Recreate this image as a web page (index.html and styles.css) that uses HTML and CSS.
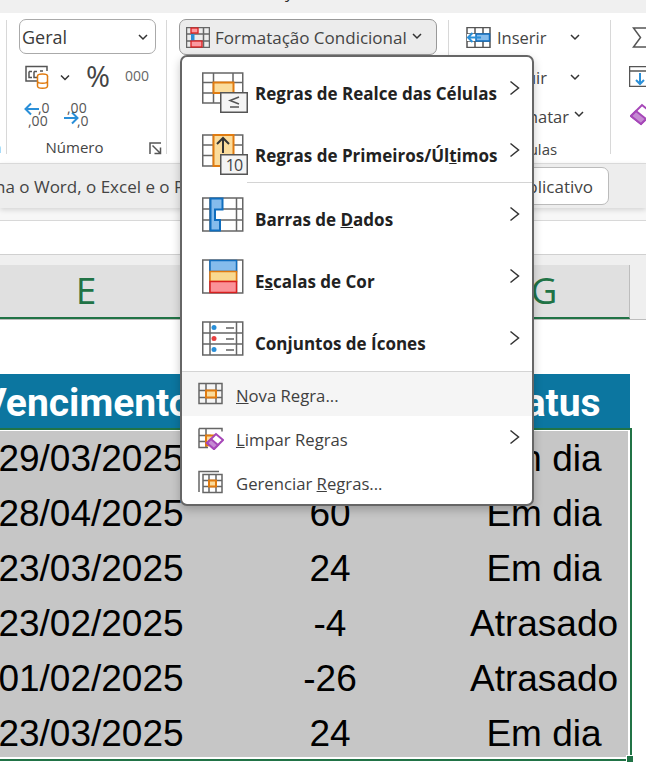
FILE: index.html
```html
<!DOCTYPE html>
<html lang="pt">
<head>
<meta charset="utf-8">
<title>Formatação Condicional</title>
<link rel="stylesheet" href="styles.css">
</head>
<body>
<div class="page">
  <div class="topbar"><span class="topfrag">y</span></div>
  <div class="ribbon">
    <div class="group g-clip"><span class="glabel-frag">a</span></div>
    <div class="group g-num">
      <div class="select"><span>Geral</span>
        <svg class="chev" width="12" height="8" viewBox="0 0 12 8"><path d="M2 2l4 4 4-4" class="ln"/></svg>
      </div>
      <div class="numrow">
        <svg class="ic-acc" width="24" height="24" viewBox="0 0 24 24"><path d="M1 6V1.500h21V6M1 6v10h11" class="dk"/><path d="M4 6.500h3M4 6.500v6h3M9 6.500h3M9 6.500v6h3M15 6h3" class="dk"/><ellipse cx="17.500" cy="11" rx="5" ry="2" class="or"/><path d="M12.500 11v10c0 3 10 3 10 0V11M12.500 16c0 3 10 3 10 0" class="or"/></svg>
        <svg class="chev-s" width="10" height="7" viewBox="0 0 10 7"><path d="M1 1.500l4 4 4-4" class="ln"/></svg>
        <span class="pct">%</span>
        <span class="thou">000</span>
      </div>
      <div class="decrow">
        <div class="dec"><svg class="dec-arrow" width="24" height="24" viewBox="0 0 24 24"><path d="M15 9H2M7 3.500L1.500 9 7 14.500" class="bl"/></svg><span class="dec-t">,0</span><span class="dec-b">,00</span></div>
        <div class="dec"><svg class="dec-arrow" width="24" height="26" viewBox="0 0 24 26"><path d="M1 18h13M9 12.500l5.500 5.500L9 23.500" class="bl"/></svg><span class="dec-t2">,00</span><span class="dec-b2">,0</span></div>
      </div>
      <div class="glabel">Número
        <svg class="launch" width="14" height="14" viewBox="0 0 14 14"><path d="M1 12V1h11M3.500 3.500l8 8M5.500 11.500h6v-6" class="dk"/></svg>
      </div>
    </div>
    <div class="group g-style">
      <div class="cfbtn">
        <svg class="cf-ic" width="24" height="21" viewBox="0 0 24 21"><path d="M.5.500h23v20H.5zM6 .5v20M17.500.5v20M.5 7h23M.5 14h23" class="gr"/><rect x="5" y="1" width="7" height="5" class="redb"/><rect x="5" y="7" width="3.500" height="7" class="blub"/><rect x="5" y="14" width="11" height="6" class="redb"/></svg>
        <span>Formatação Condicional</span>
        <svg class="chev2" width="12" height="8" viewBox="0 0 12 8"><path d="M2 2l4 4 4-4" class="ln"/></svg>
      </div>
    </div>
    <div class="group g-cells">
      <div class="cellrow r1">
        <svg class="ins" width="25" height="21" viewBox="0 0 25 21"><path d="M1 .5h23v20H1zM9 .5v20M17 .5v20M1 7h23M1 14h23" class="dk"/><rect x="1" y="7" width="10" height="7" class="whf"/><rect x="10" y="7" width="13.500" height="7" class="sb"/><path d="M15 10.500H2M6.500 6L2 10.500 6.500 15" class="bl"/></svg>
        <span class="cell-t">Inserir</span>
        <svg class="cell-ch" width="12" height="8" viewBox="0 0 12 8"><path d="M2 2l4 4 4-4" class="ln"/></svg>
      </div>
      <div class="cellrow r2">
        <span class="cell-t2">Excluir</span>
        <svg class="cell-ch" width="12" height="8" viewBox="0 0 12 8"><path d="M2 2l4 4 4-4" class="ln"/></svg>
      </div>
      <div class="cellrow r3">
        <span class="cell-t3">Formatar</span>
        <svg class="cell-ch3" width="12" height="8" viewBox="0 0 12 8"><path d="M2 2l4 4 4-4" class="ln"/></svg>
      </div>
      <div class="glabel g2">Células</div>
    </div>
    <div class="group g-edit">
      <svg class="sig" width="16" height="21" viewBox="0 0 16 21"><path d="M16 1H1.500l7 9.500-7 9.500H16" class="dk"/></svg>
      <svg class="fil" width="20" height="21" viewBox="0 0 20 21"><path d="M20 .5H.5v20H20M.5 5H20" class="dk"/><path d="M11 7v11M7 14l4 4 4-4" class="bl"/></svg>
      <svg class="era" width="20" height="24" viewBox="0 0 20 24"><path d="M1 13l11-11 10 8-11 11z" class="pu"/><path d="M1 13l5-5 10 8-5 5z" class="puf"/></svg>
    </div>
  </div>
  <div class="msgbar">
    <span class="msgtext">na o Word, o Excel e o PowerPoint</span>
    <span class="msgbtn">Atualizar aplicativo</span>
  </div>
  <div class="formula"></div>
  <div class="colstrip">
    <div class="colhead">
      <span class="coll">E</span><span class="coll">F</span><span class="coll">G</span>
    </div>
  </div>
  <div class="gap"></div>
  <div class="table">
    <div class="thead"><span>Vencimento</span><span>Dias</span><span>Status</span></div>
    <div class="selection">
      <div class="tbody">
        <div class="row"><span>29/03/2025</span><span>30</span><span>Em dia</span></div>
        <div class="row"><span>28/04/2025</span><span>60</span><span>Em dia</span></div>
        <div class="row"><span>23/03/2025</span><span>24</span><span>Em dia</span></div>
        <div class="row"><span>23/02/2025</span><span>-4</span><span>Atrasado</span></div>
        <div class="row"><span>01/02/2025</span><span>-26</span><span>Atrasado</span></div>
        <div class="row"><span>23/03/2025</span><span>24</span><span>Em dia</span></div>
      </div>
      <i class="handle"></i>
    </div>
  </div>

  <div class="menu">
    <div class="item big">
      <span class="mi"><svg class="drop" width="46" height="41" viewBox="0 0 46 41"><path d="M.75 1h40v30h-40zM11.500 1v30M31 1v30M.75 10.500h40M.75 21h40" class="gr"/><rect x="11.500" y="10.500" width="20" height="10.500" class="orf"/><rect x="18.750" y="20.750" width="26.500" height="19.500" class="sub"/><path d="M37 25l-9 3.500 9 3.500M28 35h9" class="dk"/></svg></span>
      <span class="mt">Re<u>g</u>ras de Realce das Células</span>
      <svg class="mc" width="11" height="16" viewBox="0 0 11 16"><path d="M1.500 1.500l8 6.500-8 6.500" class="ln"/></svg>
    </div>
    <div class="item big">
      <span class="mi"><svg class="drop" width="46" height="41" viewBox="0 0 46 41"><path d="M.75 1h40v31h-40zM11.500 1v31M31 1v31M.75 11h40M.75 21.500h40" class="gr"/><rect x="11.500" y="1" width="20" height="31" class="orf"/><path d="M21 19V4M15 10l6-6 6 6" class="dk2"/><rect x="18.750" y="20.750" width="26.500" height="19.500" class="sub"/><text x="32" y="37" class="ten">10</text></svg></span>
      <span class="mt">Regras de Primeiros/Úl<u>t</u>imos</span>
      <svg class="mc" width="11" height="16" viewBox="0 0 11 16"><path d="M1.500 1.500l8 6.500-8 6.500" class="ln"/></svg>
    </div>
    <div class="msep short"></div>
    <div class="item big">
      <span class="mi"><svg width="46" height="41" viewBox="0 0 46 41"><path d="M.75 4h40v33h-40zM8 4v33M34.500 4v33M.75 15h40M.75 26h40" class="gr"/><path d="M8.500 4.500h12v11h-7.500v10.500h5v10.500h-9.500z" class="bar"/></svg></span>
      <span class="mt">Barras de <u>D</u>ados</span>
      <svg class="mc" width="11" height="16" viewBox="0 0 11 16"><path d="M1.500 1.500l8 6.500-8 6.500" class="ln"/></svg>
    </div>
    <div class="item big">
      <span class="mi"><svg width="46" height="41" viewBox="0 0 46 41"><path d="M.75 4h40v33h-40zM8 4v33M34.500 4v33" class="gr"/><rect x="8" y="4.500" width="26.500" height="11" class="sb"/><rect x="8" y="15.500" width="26.500" height="10" class="so"/><rect x="8" y="25.500" width="26.500" height="11" class="sr"/></svg></span>
      <span class="mt">E<u>s</u>calas de Cor</span>
      <svg class="mc" width="11" height="16" viewBox="0 0 11 16"><path d="M1.500 1.500l8 6.500-8 6.500" class="ln"/></svg>
    </div>
    <div class="item big">
      <span class="mi"><svg width="46" height="41" viewBox="0 0 46 41"><path d="M.75 4h40v33h-40zM8 4v33M34.500 4v33M.75 15h40M.75 26h40" class="gr"/><circle cx="12" cy="9.500" r="2.500" class="db"/><circle cx="12" cy="20.500" r="2.500" class="dr"/><circle cx="12" cy="31.500" r="2.500" class="db"/><path d="M24 10h8M24 21h8M24 32h8" class="dash"/></svg></span>
      <span class="mt">Conjuntos de Ícones</span>
      <svg class="mc" width="11" height="16" viewBox="0 0 11 16"><path d="M1.500 1.500l8 6.500-8 6.500" class="ln"/></svg>
    </div>
    <div class="msep full"></div>
    <div class="item small hover">
      <span class="si"><svg width="26" height="24" viewBox="0 0 26 24"><path d="M1 1.500h23v20H1zM8 1.500v20M18 1.500v20M1 8.500h23M1 15.500h23" class="gr"/><rect x="8" y="8.500" width="10" height="7" class="orf"/></svg></span>
      <span class="st"><u>N</u>ova Regra...</span>
    </div>
    <div class="item small">
      <span class="si"><svg width="26" height="24" viewBox="0 0 26 24"><path d="M1 2.500h23v3M1 2.500v19h9M8 2.500v19M1 9.500h12M1 15.500h8" class="gr"/><path d="M8 9.500h10v4l-8 6H8z" class="orf"/><path d="M9 17l9-9 7 6-9 9z" class="pw"/><path d="M9 17l4-4 7 6-4 4z" class="puf"/></svg></span>
      <span class="st"><u>L</u>impar Regras</span>
    </div>
    <div class="item small">
      <span class="si"><svg width="26" height="24" viewBox="0 0 26 24"><path d="M1 22V1.500h20" class="gr"/><path d="M5 4.500h19v18H5zM11 4.500v18M18 4.500v18M5 10.500h19M5 16.500h19" class="gr"/><rect x="11" y="10.500" width="7" height="6" class="orf"/></svg></span>
      <span class="st">Gerenciar <u>R</u>egras...</span>
    </div>
    <svg class="mc limpar" width="11" height="16" viewBox="0 0 11 16"><path d="M1.500 1.500l8 6.500-8 6.500" class="ln"/></svg>
  </div>
</div>
</body>
</html>
```

FILE: styles.css
```css
* { box-sizing: border-box; }
html, body { margin: 0; padding: 0; background: #fff; }
body { font-family: "Open Sans", "Noto Sans", sans-serif; color: #2b2b2b; }
.page { position: relative; width: 646px; height: 773px; overflow: hidden; }
svg { display: block; fill: none; }

/* svg strokes */
.ln { stroke: #333; stroke-width: 1.5; }
.dk { stroke: #555; stroke-width: 1.5; }
.dk2 { stroke: #333; stroke-width: 2; }
.gr { stroke: #666; stroke-width: 1.5; }
.or { stroke: #e07b10; stroke-width: 1.5; fill: #fff; }
.bl { stroke: #2a8fd8; stroke-width: 2; }
.whf { fill: #fff; }
.redb { fill: #fb9aa0; stroke: #d92020; stroke-width: 1.3; }
.blub { fill: #2a8fd8; }
.pu { stroke: #a647b8; stroke-width: 2; fill: #fff; }
.puf { stroke: #a647b8; stroke-width: 2; fill: #c58ad3; }
.pw { stroke: #a647b8; stroke-width: 2; fill: #fff; }
.orf { fill: #fbdc9c; stroke: #e07b10; stroke-width: 2; }
.sub { fill: #f4f4f4; stroke: #555; stroke-width: 1.5; }
.bar { fill: #85bcec; stroke: #106ebe; stroke-width: 2; }
.sb { fill: #85bcec; stroke: #106ebe; stroke-width: 1.5; }
.so { fill: #f9d98f; stroke: #e07b10; stroke-width: 1.5; }
.sr { fill: #fb9298; stroke: #d92020; stroke-width: 1.5; }
.db { fill: #2a8fd8; }
.dr { fill: #e84040; }
.dash { stroke: #888; stroke-width: 2; }
.ten { font-family: "Open Sans", sans-serif; font-size: 16px; fill: #444; text-anchor: middle; letter-spacing: -1px; }

/* top */
.topbar { height: 13px; background: #f0f0f0; overflow: hidden; position: relative; }
.topfrag { display: block; margin: -20px 0 0 285px; font-size: 17px; line-height: 24px; }

/* ribbon */
.ribbon { height: 150px; background: #fff; display: flex; padding-top: 7px; }
.group { flex: none; height: 134px; border-right: 1px solid #d8d8d8; position: relative; }
.g-clip { width: 7px; overflow: hidden; }
.glabel-frag { display: block; margin: 117px 0 0 -7px; font-size: 15px; color: #444; line-height: 20px; }
.g-num { width: 160px; padding-left: 12px; }
.select { width: 137px; height: 35px; border: 1px solid #aaa; border-radius: 7px; margin-top: -1px; padding: 1px 6px 0 2px; display: flex; align-items: center; justify-content: space-between; font-size: 18px; color: #3a3a3a; }
.numrow { display: flex; align-items: flex-start; height: 46px; padding: 8px 0 0 6px; }
.ic-acc { margin-top: 3px; }
.chev-s { margin: 12px 0 0 11px; }
.pct { font-size: 29px; line-height: 33px; margin: -3px 0 0 16px; color: #444; width: 28px; }
.thou { font-size: 14px; line-height: 20px; margin: 4px 0 0 11px; color: #666; }
.decrow { display: flex; gap: 15px; padding-left: 5px; height: 26px; }
.dec { position: relative; width: 24px; height: 26px; font-size: 14px; line-height: 13px; color: #555; }
.dec-arrow { position: absolute; left: 0; top: 0; }
.dec-t { position: absolute; left: 14px; top: 1px; }
.dec-b { position: absolute; left: 4px; top: 14px; }
.dec-t2 { position: absolute; left: 4px; top: 1px; }
.dec-b2 { position: absolute; left: 14px; top: 14px; }
.glabel { font-size: 15px; line-height: 20px; color: #444; text-align: center; width: 111px; margin-top: 11px; position: relative; }
.launch { position: absolute; right: -33px; top: 5px; }
.g-style { width: 282px; padding-left: 12px; }
.cfbtn { width: 258px; height: 36px; margin-top: -1px; background: #ececec; border: 1px solid #999; border-radius: 7px; display: flex; align-items: center; padding-left: 6px; font-size: 17px; color: #444; }
.cf-ic { margin-right: 5px; }
.chev2 { margin-left: 4px; margin-top: -3px; }
.g-cells { width: 162px; }
.cellrow { display: flex; align-items: center; position: relative; height: 38px; }
.r1 { padding-left: 17px; height: 34px; margin-bottom: 4px; }
.ins { margin-right: 6px; }
.cell-t { font-size: 16.500px; color: #444; width: 70px; }
.cell-ch { position: absolute; left: 120px; top: 13px; }
.r2 .cell-ch { top: 15px; }
.cell-t2 { font-size: 16.500px; color: #444; position: absolute; right: 63px; }
.r3 { margin-top: 1px; }
.cell-t3 { font-size: 16.500px; color: #444; position: absolute; right: 41px; }
.cell-ch3 { position: absolute; left: 124px; top: 13px; }
.glabel.g2 { position: absolute; top: 119px; left: 58px; width: 46px; margin: 0; text-align: right; white-space: nowrap; }
.g-edit { width: 35px; border: 0; padding: 7px 0 0 20px; overflow: hidden; }
.sig { margin-left: 1px; }
.fil { margin: 18px 0 0 -2px; }
.era { margin: 16px 0 0 -1px; }

/* message bar */
.msgbar { height: 45px; background: #ededed; border-top: 1px solid #d9d9d9; box-shadow: 0 2px 5px rgba(0,0,0,.14); display: flex; align-items: center; position: relative; z-index: 1; font-size: 17px; color: #444; white-space: nowrap; overflow: hidden; }
.msgtext { margin-left: -5px; width: 238px; overflow: hidden; }
.msgbtn { height: 38px; padding-right: 15px; background: #fff; border: 1px solid #bbb; border-radius: 7px; display: flex; align-items: center; width: 376px; justify-content: flex-end; }

/* sheet */
.formula { height: 47px; background: #fff; border-top: 12px solid #f7f7f7; border-bottom: 1px solid #d0d0d0; position: relative; }
.formula::before { content: ""; display: block; height: 1px; background: #d8d8d8; }
.colstrip { height: 65px; background: #efefef; padding-top: 10px; border-bottom: 1px solid #bdbdbd; }
.colhead { width: 630px; height: 54px; background: #e0e0e0; border-right: 1px solid #bdbdbd; border-bottom: 2px solid #217346; display: grid; grid-template-columns: 172px 288px 168px; }
.coll { text-align: center; font-size: 37px; line-height: 50px; color: #217346; }
.gap { height: 54px; background: #fff; }
.table { margin-left: -20px; width: 652px; }
.thead { height: 54px; width: 650px; background: #0c76a0; color: #fff; display: grid; grid-template-columns: 212px 266px 172px; font-family: Roboto, sans-serif; font-weight: 700; font-size: 39px; line-height: 58px; text-align: center; white-space: nowrap; }
.selection { position: relative; width: 652px; height: 333px; border: 2px solid #217346; background: #fff; padding: 1px; }
.tbody { height: 326px; background: #c6c6c6; overflow: hidden; margin-right: 1px; }
.row { height: 55px; display: grid; grid-template-columns: 216px 262px 166px; font-family: "Liberation Sans", Arial, sans-serif; font-size: 37px; line-height: 56px; text-align: center; color: #000; white-space: nowrap; }
.handle { position: absolute; right: -3px; bottom: -3px; width: 7px; height: 7px; background: #217346; border: 1px solid #fff; border-width: 1px 0 0 1px; }

/* menu */
.menu { position: absolute; left: 180px; top: 55px; width: 354px; height: 451px; background: #fff; border: 2px solid #666; border-radius: 7px; box-shadow: 0 4px 10px rgba(0,0,0,.22); z-index: 5; }
.item { display: flex; align-items: center; position: relative; }
.big { height: 62px; padding-left: 20px; }
.mi { width: 53px; }
.drop { margin-top: 8px; }
.mt { font-size: 17px; font-weight: 700; color: #222; margin-top: 10px; white-space: nowrap; flex: 1; }
.mc { margin-right: 12px; margin-left: 8px; }
.msep { height: 1px; background: #d4d4d4; }
.msep.short { margin: 1px 0 0 65px; }
.msep.full { margin-top: 2px; }
.small { height: 44px; padding-left: 16px; }
.hover { background: #f5f5f5; }
.si { width: 38px; }
.st { font-size: 16.700px; color: #3f3f3f; white-space: nowrap; margin-top: 3px; }
.mc.limpar { position: absolute; right: 0; top: 372px; }
```
